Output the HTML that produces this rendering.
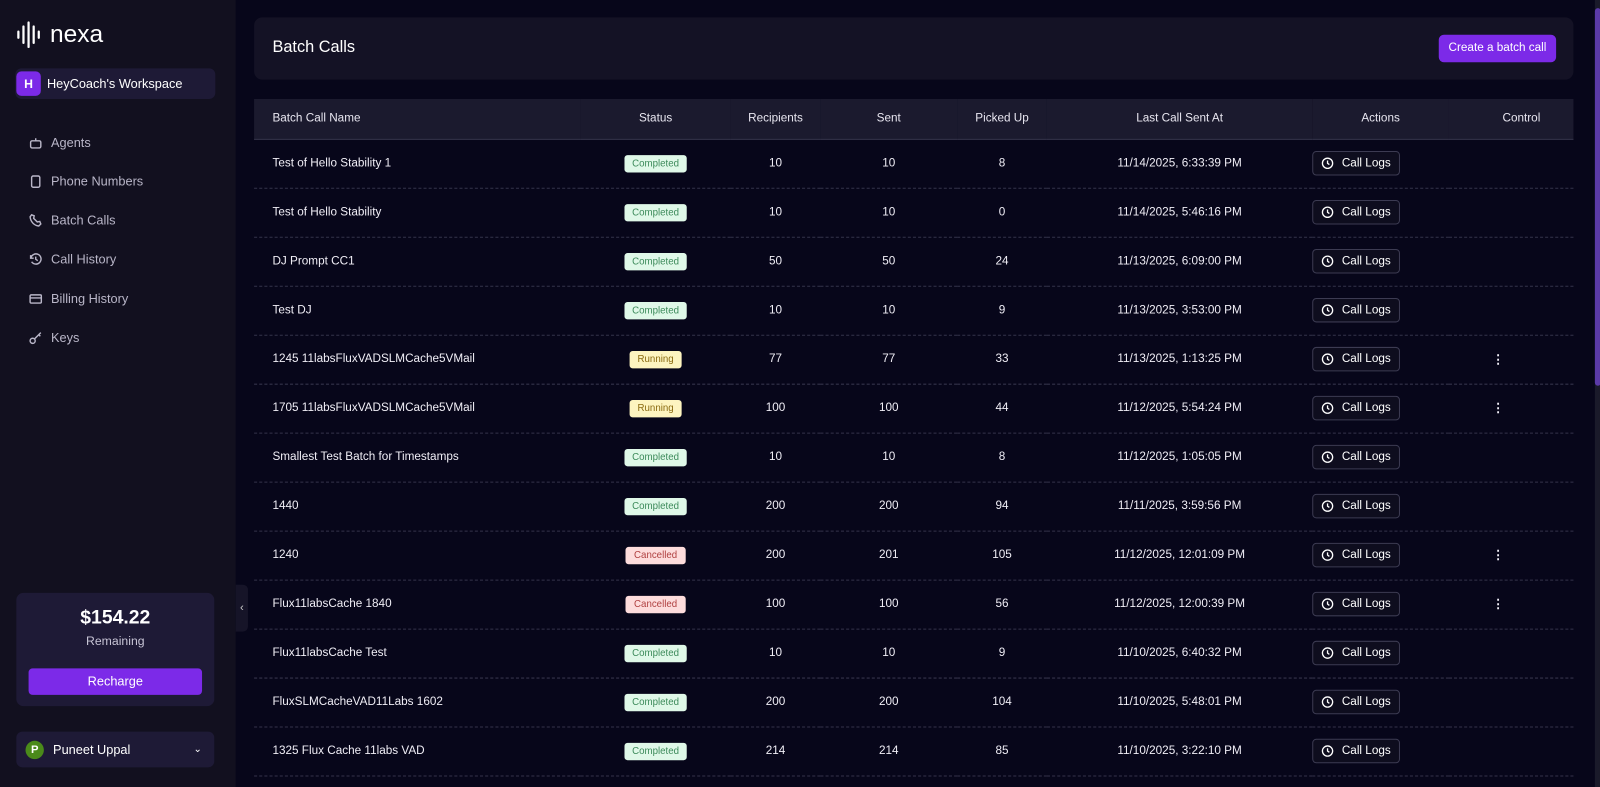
<!DOCTYPE html>
<html style="overflow:hidden;height:787px"><head><meta charset="utf-8"><style>
*{box-sizing:border-box;margin:0;padding:0}
body{width:1600px;height:787px;overflow:hidden;background:#07061a;font-family:"Liberation Sans",sans-serif;color:#e8e6f0;position:relative}
#w{position:absolute;left:0;top:0;width:1568px;height:772px;overflow:hidden;transform:scale(1.0204);transform-origin:0 0}
.side{position:absolute;left:0;top:0;width:231px;height:772px;background:#12101f}
.logo{position:absolute;left:16px;top:20px;display:flex;align-items:center;gap:7px;font-size:24px;color:#fff}
.ws{position:absolute;left:15px;top:67px;width:196px;height:30px;background:#1e1a36;border-radius:6px;display:flex;align-items:center;font-size:12.5px;color:#fff}
.ws .a{width:24px;height:24px;background:#7c2ae8;border-radius:5px;margin:0 6px 0 1px;display:flex;align-items:center;justify-content:center;font-size:12px;font-weight:bold}
.nav{position:absolute;left:28px;font-size:12.5px;color:#b9b6c8;display:flex;align-items:center;gap:8px}
.nav svg{width:14px;height:14px;stroke:#b9b6c8;fill:none;stroke-width:1.4}
.bal{position:absolute;left:16px;top:581px;width:194px;height:111px;background:#1e1a36;border-radius:7px;text-align:center}
.bal .amt{margin-top:14px;font-size:19px;font-weight:bold;color:#fff}
.bal .rem{font-size:12px;color:#c8c5d6;margin-top:4px}
.bal .btn{position:absolute;left:12px;top:74px;width:170px;height:26px;background:#7c2ae8;border-radius:4px;font-size:12.5px;line-height:26px;color:#fff}
.user{position:absolute;left:16px;top:717px;width:194px;height:35px;background:#1e1a36;border-radius:6px;display:flex;align-items:center;font-size:12.5px;color:#fff}
.user .a{width:18px;height:18px;border-radius:50%;background:#4a8a1a;margin:0 9px 0 9px;font-size:11px;font-weight:bold;display:flex;align-items:center;justify-content:center}
.tog{position:absolute;left:231px;top:573px;width:12px;height:46px;background:#161428;border-radius:0 5px 5px 0;font-size:11px;color:#ccc;text-align:center;line-height:46px}
.head{position:absolute;left:249px;top:17px;width:1293px;height:61px;background:#141225;border-radius:8px}
.head h1{position:absolute;left:18px;top:21px;font-size:16px;font-weight:normal;color:#fff}
.head .btn{position:absolute;right:17px;top:17px;width:115px;height:27px;background:#7c2ae8;border-radius:5px;font-size:11.5px;color:#fff;text-align:center;line-height:27px}
table{position:absolute;left:249px;top:97px;width:1293px;border-collapse:collapse;font-size:11.5px}
th{height:39px;background:#1b1a2e;font-weight:normal;color:#e8e6f0;border-bottom:1px solid #3a3950}
td{height:48px;border-bottom:1px dashed #34334a;text-align:center;color:#f0eef6}
td:first-child,th:first-child{text-align:left;padding-left:18px}
td.ac{text-align:left;padding-left:0}
th.ct{padding-left:20px}
td.ct{padding-right:26px}
.b{display:inline-block;font-size:9.5px;padding:3px 8px;border-radius:3px}
.c{background:#dff8e8;color:#3c8a5a}.r{background:#fdf4c0;color:#8a6a10}.x{background:#fddcdc;color:#b04040}
.cl{display:inline-flex;align-items:center;gap:8px;border:1px solid #3c3b52;background:#0e0d1e;border-radius:4px;height:24px;padding:0 8px;font-size:11.5px;color:#fff}
.dots{font-weight:bold;font-size:12px}
.sb{position:absolute;left:1563px;top:0;width:6px;height:772px;background:#1a1a2a}
.sb div{position:absolute;top:8px;width:6px;height:370px;background:#5b3aa8;border-radius:3px}
</style></head><body><div id="w">
<div class="side">
<div class="logo"><svg width="26" height="28" viewBox="0 0 26 28" stroke="#fff" stroke-width="2.2" stroke-linecap="round"><path d="M2 11v6M7 6v16M12 2v24M17 6v16M22 11v6"/></svg><span>nexa</span></div>
<div class="ws"><div class="a">H</div>HeyCoach's Workspace</div>
<div class="nav" style="top:133px"><svg viewBox="0 0 14 14"><rect x="2" y="5" width="10" height="7" rx="1.5"/><path d="M7 5V2.5M5 8.5h0M9 8.5h0"/></svg>Agents</div>
<div class="nav" style="top:171px"><svg viewBox="0 0 14 14"><rect x="3" y="1.5" width="8" height="11" rx="1.5"/><path d="M7 10.5h0"/></svg>Phone Numbers</div>
<div class="nav" style="top:209px"><svg viewBox="0 0 14 14"><path d="M3 1.5l2.5 1-.5 2.5 3.5 3.5 2.5-.5 1 2.5-2 2C5 12 2 8 1.5 3.5z"/></svg>Batch Calls</div>
<div class="nav" style="top:247px"><svg viewBox="0 0 14 14"><path d="M2 3v3h3M2.3 6A5 5 0 1 1 3 9.5M7 4.5V7l2 1.5"/></svg>Call History</div>
<div class="nav" style="top:286px"><svg viewBox="0 0 14 14"><rect x="1.5" y="3" width="11" height="8" rx="1"/><path d="M1.5 6h11"/></svg>Billing History</div>
<div class="nav" style="top:324px"><svg viewBox="0 0 14 14"><circle cx="4" cy="10" r="2.5"/><path d="M6 8l6-6M10 4l1.5 1.5"/></svg>Keys</div>
<div class="bal"><div class="amt">$154.22</div><div class="rem">Remaining</div><div class="btn">Recharge</div></div>
<div class="user"><div class="a">P</div>Puneet Uppal<span style="margin-left:auto;margin-right:12px;font-size:10px">&#8964;</span></div>
</div>
<div class="tog">&#8249;</div>
<div class="head"><h1>Batch Calls</h1><div class="btn">Create a batch call</div></div>
<table>
<colgroup><col style="width:320px"><col style="width:147px"><col style="width:88px"><col style="width:134px"><col style="width:88px"><col style="width:260px"><col style="width:134px"><col style="width:122px"></colgroup>
<tr><th>Batch Call Name</th><th>Status</th><th>Recipients</th><th>Sent</th><th>Picked Up</th><th>Last Call Sent At</th><th>Actions</th><th class="ct">Control</th></tr>
<tbody id="tb"></tbody>
</table>
<div class="sb"><div></div></div>
</div>
<script>
var d=[["Test of Hello Stability 1","c",10,10,8,"11/14/2025, 6:33:39 PM",0],
["Test of Hello Stability","c",10,10,0,"11/14/2025, 5:46:16 PM",0],
["DJ Prompt CC1","c",50,50,24,"11/13/2025, 6:09:00 PM",0],
["Test DJ","c",10,10,9,"11/13/2025, 3:53:00 PM",0],
["1245 11labsFluxVADSLMCache5VMail","r",77,77,33,"11/13/2025, 1:13:25 PM",1],
["1705 11labsFluxVADSLMCache5VMail","r",100,100,44,"11/12/2025, 5:54:24 PM",1],
["Smallest Test Batch for Timestamps","c",10,10,8,"11/12/2025, 1:05:05 PM",0],
["1440","c",200,200,94,"11/11/2025, 3:59:56 PM",0],
["1240","x",200,201,105,"11/12/2025, 12:01:09 PM",1],
["Flux11labsCache 1840","x",100,100,56,"11/12/2025, 12:00:39 PM",1],
["Flux11labsCache Test","c",10,10,9,"11/10/2025, 6:40:32 PM",0],
["FluxSLMCacheVAD11Labs 1602","c",200,200,104,"11/10/2025, 5:48:01 PM",0],
["1325 Flux Cache 11labs VAD","c",214,214,85,"11/10/2025, 3:22:10 PM",0],
["","c","","","","",0]];
var L={c:"Completed",r:"Running",x:"Cancelled"};
var clk='<svg width="12" height="12" viewBox="0 0 12 12" fill="none" stroke="#fff" stroke-width="1.3"><circle cx="6" cy="6" r="5"/><path d="M6 3.3V6l1.8 1.3"/></svg>';
var h="";d.forEach(function(r){h+="<tr><td>"+r[0]+'</td><td><span class="b '+r[1]+'">'+L[r[1]]+"</span></td><td>"+r[2]+"</td><td>"+r[3]+"</td><td>"+r[4]+"</td><td>"+r[5]+'</td><td class="ac"><span class="cl">'+clk+'Call Logs</span></td><td class="ct">'+(r[6]?'<span class="dots">&#8942;</span>':"")+"</td></tr>"});
document.getElementById("tb").innerHTML=h;
</script>
</body></html>
